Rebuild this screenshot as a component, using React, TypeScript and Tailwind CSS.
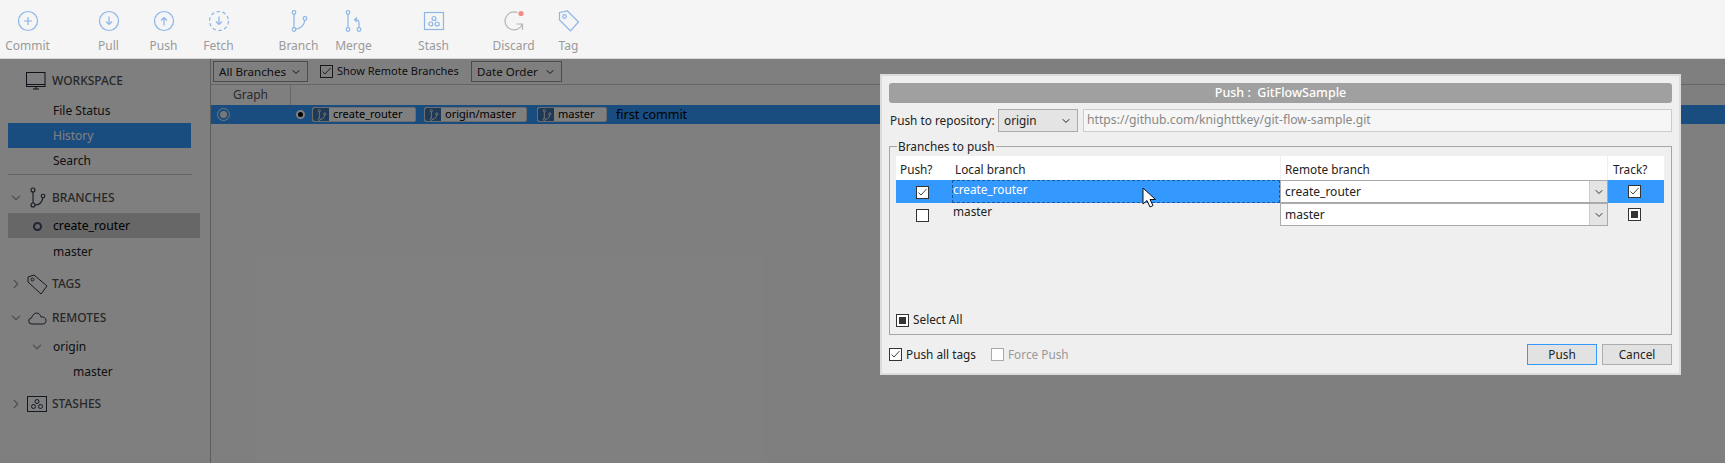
import { ReactNode } from 'react';
import { ChevronDown, ChevronRight } from 'lucide-react';

function ToolIcon({ children }: { children: ReactNode }) {
  return (
    <svg width="24" height="24" viewBox="0 0 24 24" fill="none" stroke="#8db5e8" strokeWidth="1.2">
      {children}
    </svg>
  );
}

function ToolButton({ label, children }: { label: string; children: ReactNode }) {
  return (
    <div className="flex w-[55px] flex-col items-center">
      <div className="flex h-[24px] items-center justify-center">{children}</div>
      <span className="mt-[1px] text-[12px] leading-[24px] whitespace-nowrap text-[#9a9a9a]">{label}</span>
    </div>
  );
}

function Toolbar() {
  return (
    <div className="flex h-[59px] shrink-0 border-b border-[#d8d8d8] bg-[#f5f5f5] pt-[9px]">
      <ToolButton label="Commit">
        <ToolIcon>
          <circle cx="12" cy="12" r="9.5" />
          <path d="M12 8v8M8 12h8" />
        </ToolIcon>
      </ToolButton>
      <div className="ml-[26px] flex">
        <ToolButton label="Pull">
          <ToolIcon>
            <circle cx="12" cy="12" r="9.5" />
            <path d="M12 7.5v8M9 12.5l3 3 3-3" />
          </ToolIcon>
        </ToolButton>
        <ToolButton label="Push">
          <ToolIcon>
            <circle cx="12" cy="12" r="9.5" />
            <path d="M12 16.5v-8M9 11.5l3-3 3 3" />
          </ToolIcon>
        </ToolButton>
        <ToolButton label="Fetch">
          <ToolIcon>
            <circle cx="12" cy="12" r="9.5" strokeDasharray="3.5 2.5" />
            <path d="M12 7.5v8M9 12.5l3 3 3-3" />
          </ToolIcon>
        </ToolButton>
      </div>
      <div className="ml-[25px] flex">
        <ToolButton label="Branch">
          <ToolIcon>
            <circle cx="7" cy="3.5" r="1.8" />
            <circle cx="7" cy="20.5" r="1.8" />
            <circle cx="18" cy="9.5" r="1.8" />
            <path d="M7 5.3v13.4M8.8 20c5 0 8.5-4 9-8.7" />
          </ToolIcon>
        </ToolButton>
        <ToolButton label="Merge">
          <ToolIcon>
            <circle cx="6" cy="3.5" r="1.8" />
            <circle cx="6" cy="20.5" r="1.8" />
            <circle cx="17" cy="20.5" r="1.8" />
            <path d="M6 5.3v13.4M17 18.7v-5c0-2-1.5-3-4-3M15 8.5l-2.5 2.2 2.5 2.2" />
          </ToolIcon>
        </ToolButton>
      </div>
      <div className="ml-[25px]">
        <ToolButton label="Stash">
          <ToolIcon>
            <rect x="2.5" y="3.5" width="19" height="17" />
            <circle cx="12" cy="9.5" r="2" />
            <circle cx="8.8" cy="15" r="2" />
            <circle cx="15.2" cy="15" r="2" />
          </ToolIcon>
        </ToolButton>
      </div>
      <div className="ml-[25px] flex">
        <ToolButton label="Discard">
          <svg width="24" height="24" viewBox="0 0 24 24" fill="none" stroke="#b4b4b4" strokeWidth="1.2">
            <path d="M15.5 3.5A9 9 0 1 0 20.5 15M20.5 21v-6h-6" />
            <circle cx="19" cy="4.5" r="2.6" fill="#f28b82" stroke="none" />
          </svg>
        </ToolButton>
        <ToolButton label="Tag">
          <ToolIcon>
            <path d="M2.5 3.5l8-1.5 11 11-8 9-11-11z" />
            <circle cx="7.5" cy="7.5" r="1.8" />
          </ToolIcon>
        </ToolButton>
      </div>
    </div>
  );
}

function SectionTitle({
  open,
  label,
  icon,
  className,
}: {
  open?: boolean;
  label: string;
  icon: ReactNode;
  className: string;
}) {
  return (
    <div className={`flex items-center ${className}`}>
      <div className="flex w-[16px] justify-center text-[#a8a8a8]">
        {open ? <ChevronDown size={14} strokeWidth={2.5} /> : <ChevronRight size={14} strokeWidth={2.5} />}
      </div>
      <div className="flex w-[26px] justify-center">{icon}</div>
      <span className="ml-[2px] text-[12px] font-medium text-[#505050]">{label}</span>
    </div>
  );
}

function Sidebar() {
  return (
    <div className="flex w-[211px] shrink-0 flex-col border-r border-[#bbb] pr-[10px] pl-[8px]">
      <div className="mt-[11px] flex h-[22px] items-center pl-[17px]">
        <svg width="22" height="20" viewBox="0 0 22 20" fill="#ddd" stroke="#223" strokeWidth="1">
          <rect x="1.5" y="1.5" width="18.5" height="14" fill="none" />
          <path d="M1.5 13.5h18.5M8 18h6M11 15.5V18" />
        </svg>
        <span className="ml-[5px] text-[12px] font-medium text-[#505050]">WORKSPACE</span>
      </div>
      <div className="mt-[6px] flex h-[25px] items-center pl-[45px] text-[12px] text-[#222]">File Status</div>
      <div className="mr-[9px] flex h-[25px] items-center bg-[#3399ff] pl-[45px] text-[12px] text-white">History</div>
      <div className="flex h-[25px] items-center pl-[45px] text-[12px] text-[#222]">Search</div>
      <div className="mt-[1px] w-[184px] border-b border-[#ccc]" />
      <SectionTitle
        open
        label="BRANCHES"
        className="mt-[9px] h-[28px]"
        icon={
          <svg width="18" height="22" viewBox="0 0 18 22" fill="none" stroke="#2a3344" strokeWidth="1.1">
            <circle cx="5" cy="3" r="2" />
            <circle cx="5" cy="18" r="2" />
            <circle cx="15" cy="9" r="1.8" />
            <path d="M5 5v11M7 18c4 0 7-3 8-7" />
          </svg>
        }
      />
      <div className="mt-[1px] flex h-[25px] items-center bg-[#cecece] pt-[1px] pl-[25px] text-[12.2px] text-black">
        <span className="mr-[11px] h-[9px] w-[9px] rounded-full border-2 border-[#3f4a66]" />
        create_router
      </div>
      <div className="flex h-[26px] items-center pt-[1px] pl-[45px] text-[12px] text-[#222]">master</div>
      <SectionTitle
        label="TAGS"
        className="mt-[6px] h-[28px]"
        icon={
          <svg width="21" height="21" viewBox="0 0 21 21" fill="none" stroke="#2a3344" strokeWidth="1">
            <path d="M1 3l6-2 13 11-6 8L1 8z" />
            <circle cx="5.5" cy="5.5" r="1.5" />
          </svg>
        }
      />
      <SectionTitle
        open
        label="REMOTES"
        className="mt-[6px] h-[28px]"
        icon={
          <svg width="19" height="13" viewBox="0 0 19 13" fill="none" stroke="#2a3344" strokeWidth="1">
            <path d="M4 12a3 3 0 0 1-.5-6C4.500 2.500 7 1 8.500 1c2.500 0 4 2 4.500 4 2-.5 5 .5 5 3.500 0 2-1.500 3.500-3 3.500z" />
          </svg>
        }
      />
      <div className="mt-[2px] flex h-[26px] items-center pl-[22px] text-[12px] text-[#222]">
        <ChevronDown size={14} strokeWidth={2.5} className="mr-[9px] text-[#a8a8a8]" />
        origin
      </div>
      <div className="flex h-[24px] items-center pl-[65px] text-[12px] text-[#222]">master</div>
      <SectionTitle
        label="STASHES"
        className="mt-[6px] h-[28px]"
        icon={
          <svg width="20" height="16" viewBox="0 0 20 16" fill="none" stroke="#2a3344" strokeWidth="1">
            <rect x="0.500" y="0.500" width="19" height="15" />
            <circle cx="10" cy="5.500" r="2" />
            <circle cx="6.500" cy="10.500" r="2" />
            <circle cx="13.500" cy="10.500" r="2" />
          </svg>
        }
      />
    </div>
  );
}

function FilterSelect({ label, className }: { label: string; className: string }) {
  return (
    <div className={`flex h-[21px] items-center justify-between border border-[#999] px-[5px] text-[11.6px] whitespace-nowrap text-[#222] ${className}`}>
      {label}
      <ChevronDown size={12} />
    </div>
  );
}

function RefTag({ label, className }: { label: string; className: string }) {
  return (
    <div className={`flex h-[15px] items-center rounded-[2px] border border-[#d8d8d8] bg-[#fefefe] text-[11px] whitespace-nowrap text-black ${className}`}>
      <div className="mr-[4px] flex h-[13px] w-[16px] shrink-0 items-center justify-center rounded-l-[2px] bg-[#3f74ad]">
        <svg width="11" height="12" viewBox="0 0 18 22" fill="none" stroke="#e8e8e8" strokeWidth="1.8">
          <circle cx="5" cy="3" r="2" />
          <circle cx="5" cy="19" r="2" />
          <circle cx="15" cy="9" r="2" />
          <path d="M5 5v12M7 19c4 0 7-3 8-8" />
        </svg>
      </div>
      {label}
    </div>
  );
}

function CommitArea() {
  return (
    <div className="flex min-w-0 flex-1 flex-col">
      <div className="flex h-[26px] shrink-0 items-center border-b border-[#ccc] pl-[2px]">
        <FilterSelect label="All Branches" className="w-[95px]" />
        <Check state="checked" className="ml-[12px]" />
        <span className="ml-[4px] w-[122px] text-[11px] whitespace-nowrap text-[#222]">Show Remote Branches</span>
        <FilterSelect label="Date Order" className="ml-[12px] w-[91px]" />
      </div>
      <div className="flex h-[20px] shrink-0 text-[12px] text-[#555]">
        <div className="w-[80px] border-r border-[#ccc] pl-[22px] leading-[20px]">Graph</div>
      </div>
      <div className="flex h-[19px] shrink-0 items-center bg-[#3399ff]">
        <span className="ml-[6px] flex h-[13px] w-[13px] items-center justify-center rounded-full border border-[#eee]">
          <span className="h-[7px] w-[7px] rounded-full bg-[#eee]" />
        </span>
        <span className="ml-[66px] h-[9px] w-[9px] rounded-full border-2 border-white bg-black" />
        <RefTag label="create_router" className="ml-[7px] w-[104px]" />
        <RefTag label="origin/master" className="ml-[8px] w-[103px]" />
        <RefTag label="master" className="ml-[10px] w-[70px]" />
        <span className="ml-[9px] text-[12.5px] leading-[15px] text-black">first commit</span>
      </div>
    </div>
  );
}

function Check({ state, className = '' }: { state: 'checked' | 'mixed' | 'empty' | 'disabled'; className?: string }) {
  const border = state === 'disabled' ? 'border-[#aaa]' : 'border-[#333]';
  return (
    <span className={`flex h-[13px] w-[13px] shrink-0 items-center justify-center border bg-white ${border} ${className}`}>
      {state === 'checked' && (
        <svg width="11" height="11" viewBox="0 0 11 11" fill="none" stroke="#444" strokeWidth="1">
          <path d="M1.500 5.500l2.500 2.500 5.500-6" />
        </svg>
      )}
      {state === 'mixed' && <span className="h-[7px] w-[7px] bg-[#333]" />}
    </span>
  );
}

function RemoteSelect({ value, className = '' }: { value: string; className?: string }) {
  return (
    <div className={`flex h-[23px] items-center border border-[#aaa] bg-white ${className}`}>
      <span className="flex-1 pt-[1px] pl-[4px] text-[12px] text-[#222]">{value}</span>
      <span className="flex h-full w-[18px] items-center justify-center border-l border-[#ccc] bg-[#e4e4e4]">
        <ChevronDown size={12} className="text-[#333]" />
      </span>
    </div>
  );
}

function PushDialog() {
  return (
    <div className="absolute top-[74px] left-[880px] flex h-[301px] w-[801px] flex-col border-2 border-[#dcdcdc] bg-[#efefef] px-[7px] pt-[7px] text-[11.8px] text-[#222]">
      <div className="flex h-[20px] shrink-0 items-center justify-center rounded-[3px] bg-[#a0a0a0] text-[12.5px] font-medium text-white">
        Push :&nbsp; GitFlowSample
      </div>
      <div className="mt-[6px] flex h-[23px] shrink-0 items-center">
        <span className="ml-[1px] w-[108px] whitespace-nowrap">Push to repository:</span>
        <div className="flex h-[23px] w-[80px] items-center justify-between border border-[#aaa] bg-[#e4e4e4] px-[5px]">
          origin
          <ChevronDown size={12} />
        </div>
        <div className="ml-[5px] flex h-[23px] flex-1 items-center border border-[#ccc] bg-[#f6f6f6] px-[3px] text-[12.2px] text-[#888]">
          https://github.com/knighttkey/git-flow-sample.git
        </div>
      </div>
      <fieldset className="mt-[5px] h-[198px] shrink-0 border border-[#a6a6a6] px-[6px]">
        <legend className="ml-[1px] px-[1px] leading-[18px]">Branches to push</legend>
        <div className="mt-[1px] flex h-[178px] flex-col">
          <div className="grid grid-cols-[56px_328px_328px_56px] grid-rows-[24px_23px_23px]">
            <div className="bg-white pl-[4px] leading-[26px]">Push?</div>
            <div className="bg-white pl-[3px] leading-[26px]">Local branch</div>
            <div className="border-x border-[#eee] bg-white pl-[4px] leading-[26px]">Remote branch</div>
            <div className="bg-white pl-[5px] leading-[26px]">Track?</div>

            <div className="flex items-center justify-center bg-[#3399ff] pt-[1px] pr-[3px]">
              <Check state="checked" />
            </div>
            <div className="border border-dashed border-[#1d5a9c] bg-[#3399ff] leading-[16px] text-white">create_router</div>
            <RemoteSelect value="create_router" />
            <div className="flex items-center justify-center bg-[#3399ff] pr-[4px]">
              <Check state="checked" />
            </div>

            <div className="flex items-center justify-center pt-[1px] pr-[3px]">
              <Check state="empty" />
            </div>
            <div className="pl-[1px] leading-[16px]">master</div>
            <RemoteSelect value="master" />
            <div className="flex items-center justify-center pr-[4px]">
              <Check state="mixed" />
            </div>
          </div>
          <label className="mt-auto mb-[5px] flex h-[18px] items-center gap-[4px]">
            <Check state="mixed" />
            Select All
          </label>
        </div>
      </fieldset>
      <div className="mt-[9px] flex h-[21px] shrink-0 items-center">
        <Check state="checked" />
        <span className="ml-[4px]">Push all tags</span>
        <Check state="disabled" className="ml-[15px] bg-[#efefef]" />
        <span className="ml-[4px] text-[#999]">Force Push</span>
        <button className="ml-auto h-[21px] w-[70px] border border-[#3399ff] bg-[#e2e2e2]">Push</button>
        <button className="ml-[5px] h-[21px] w-[70px] border border-[#adadad] bg-[#e2e2e2]">Cancel</button>
      </div>
    </div>
  );
}

export default function App() {
  return (
    <div className="relative flex h-[463px] w-[1725px] flex-col overflow-hidden bg-white font-['Noto_Sans',sans-serif]">
      <Toolbar />
      <div className="relative flex min-h-0 flex-1">
        <Sidebar />
        <CommitArea />
        <div className="absolute inset-0 bg-black/50" />
      </div>
      <PushDialog />
      <svg className="absolute top-[187px] left-[1142px]" width="14" height="22" viewBox="0 0 14 22">
        <path d="M1 1v16l4-3.500 3 6.500 3-1.500-3-6h5.500z" fill="white" stroke="#111" strokeWidth="1" />
      </svg>
    </div>
  );
}
